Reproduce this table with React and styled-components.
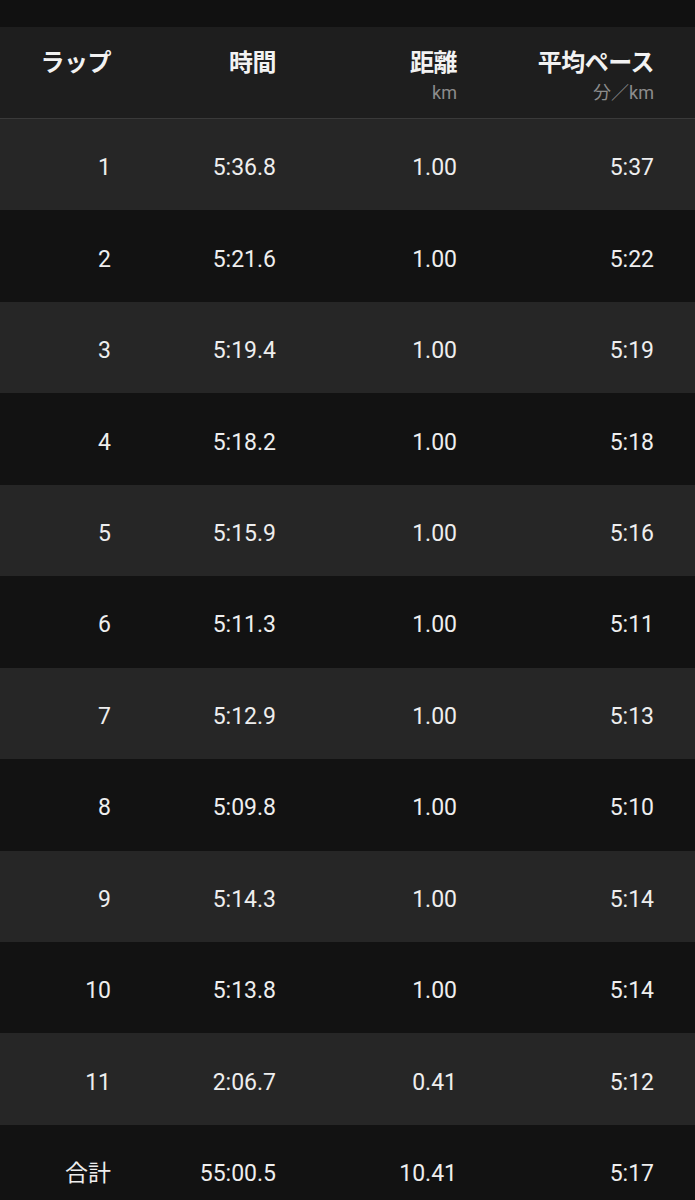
import React from "react";
import styled, { createGlobalStyle } from "styled-components";

const laps = [
  ["1", "5:36.8", "1.00", "5:37"],
  ["2", "5:21.6", "1.00", "5:22"],
  ["3", "5:19.4", "1.00", "5:19"],
  ["4", "5:18.2", "1.00", "5:18"],
  ["5", "5:15.9", "1.00", "5:16"],
  ["6", "5:11.3", "1.00", "5:11"],
  ["7", "5:12.9", "1.00", "5:13"],
  ["8", "5:09.8", "1.00", "5:10"],
  ["9", "5:14.3", "1.00", "5:14"],
  ["10", "5:13.8", "1.00", "5:14"],
  ["11", "2:06.7", "0.41", "5:12"],
  ["合計", "55:00.5", "10.41", "5:17"],
];

const headers = [
  { title: "ラップ" },
  { title: "時間" },
  { title: "距離", unit: "km" },
  { title: "平均ペース", unit: "分／km" },
];

export default function App() {
  return (
    <Page>
      <GlobalStyle />
      <TopStrip />
      <HeaderRow>
        {headers.map((h) => (
          <HeadCell key={h.title}>
            <HeadTitle>{h.title}</HeadTitle>
            {h.unit && <HeadUnit>{h.unit}</HeadUnit>}
          </HeadCell>
        ))}
      </HeaderRow>
      {laps.map((lap, i) => (
        <Row key={lap[0]} $light={i % 2 === 0}>
          {lap.map((v, j) => (
            <Cell key={j}>{v}</Cell>
          ))}
        </Row>
      ))}
    </Page>
  );
}

const GlobalStyle = createGlobalStyle`
  body {
    margin: 0;
    background: #111111;
    font-family: Roboto, "Noto Sans CJK JP", sans-serif;
  }
`;

const Page = styled.div`
  width: 695px;
  height: 1200px;
  overflow: hidden;
  background: #111111;
  color: #efefef;
`;

const TopStrip = styled.div`
  height: 27px;
  background: #111111;
`;

const grid = `
  display: grid;
  grid-template-columns: 111px 165px 181px 197px;
  padding-right: 41px;
`;

const HeaderRow = styled.div`
  ${grid}
  height: 91px;
  background: #1e1e1e;
  border-bottom: 1px solid #3a3a3a;
`;

const HeadCell = styled.div`
  display: flex;
  flex-direction: column;
  align-items: flex-end;
  padding-top: 17px;
`;

const HeadTitle = styled.div`
  font-family: "Noto Sans CJK JP", sans-serif;
  font-weight: 700;
  font-size: 24px;
  line-height: 34px;
  color: #f2f2f2;
  letter-spacing: -0.5px;
`;

const HeadUnit = styled.div`
  font-family: Roboto, "Noto Sans CJK JP", sans-serif;
  font-size: 18px;
  line-height: 24px;
  color: #8c8c8c;
  margin-top: 3px;
`;

const Row = styled.div`
  ${grid}
  height: 91.45px;
  align-items: center;
  background: ${(p) => (p.$light ? "#262626" : "#121212")};
`;

const Cell = styled.div`
  text-align: right;
  font-size: 23px;
  line-height: 28px;
  padding-top: 7px;
  color: #eeeeee;
`;
